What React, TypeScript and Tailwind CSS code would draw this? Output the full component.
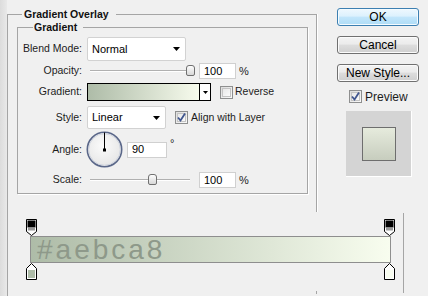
import React from "react";

function Arrow() {
  return (
    <svg width="7" height="4" viewBox="0 0 7 4">
      <polygon points="0,0 7,0 3.5,4" fill="#000" />
    </svg>
  );
}

function Select({ w, h, label }: { w: string; h: string; label: string }) {
  return (
    <div className={`${w} ${h} bg-white border border-[#d2d2d2] rounded-[2px] flex items-center justify-between pl-[4px] pr-[5px] text-[11px] text-black`}>
      <span>{label}</span>
      <Arrow />
    </div>
  );
}

function Checkbox({ checked }: { checked?: boolean }) {
  return (
    <div className="w-[13px] h-[13px] border border-[#8e8f8f] bg-gradient-to-br from-[#dcdcdc] to-[#fafafa] flex items-center justify-center shrink-0">
      <div className="w-[9px] h-[9px] border border-[#c4c4c4] bg-gradient-to-br from-[#e8e8e8] to-[#fbfbfb] flex items-center justify-center">
        {checked && (
          <svg width="9" height="9" viewBox="0 0 9 9" className="overflow-visible">
            <path d="M1 4.5 L3.5 7.5 L8 0.5" fill="none" stroke="#40568f" strokeWidth="1.8" />
          </svg>
        )}
      </div>
    </div>
  );
}

function Slider({ thumb }: { thumb: string }) {
  return (
    <div className="relative w-[110px] h-[16px]">
      <div className="absolute left-[3px] top-[7px] w-[100px] h-[2px] border-t border-[#b0b0b0] border-b border-b-white" />
      <div className={`absolute ${thumb} top-[2px] w-[9px] h-[11px] rounded-t-[3px] rounded-b-[2px] border border-[#707070] bg-gradient-to-b from-[#fdfdfd] to-[#d8d8d8]`} />
    </div>
  );
}

function Input({ w, value }: { w: string; value: string }) {
  return (
    <div className={`${w} h-[16px] bg-white border border-[#d0d0d0] flex items-center pl-[4px] text-[11px] text-black`}>
      {value}
    </div>
  );
}

function Label({ children }: { children: React.ReactNode }) {
  return <span className="w-[64px] text-right shrink-0">{children}</span>;
}

function TopStop() {
  return (
    <svg width="11" height="17" viewBox="0 0 11 17">
      <path d="M0.5 0.5 H10.5 V12.5 L5.5 16.5 L0.5 12.5 Z" fill="#fff" stroke="#000" />
      <rect x="1.5" y="1.5" width="8" height="7" fill="#000" />
      <rect x="2" y="8.5" width="7" height="3" fill="#9a9a9a" />
    </svg>
  );
}

function BottomStop({ color }: { color: string }) {
  return (
    <svg width="11" height="17" viewBox="0 0 11 17">
      <path d="M5.5 0.5 L10.5 5.5 V16.5 H0.5 V5.5 Z" fill="#fff" stroke="#000" />
      <rect x="2" y="7" width="7" height="8" fill={color} />
    </svg>
  );
}

function Button({ children, primary }: { children: React.ReactNode; primary?: boolean }) {
  return (
    <div
      className={
        primary
          ? "h-[18px] w-[82px] rounded-[3px] border border-[#3c7fb1] bg-[linear-gradient(to_bottom,#eef8fe_0%,#dcf1fd_45%,#c2e6fb_50%,#aedcf6_100%)] shadow-[inset_0_0_0_1px_#f4fbff] flex items-center justify-center text-[12px] text-black"
          : "h-[18px] w-[82px] rounded-[3px] border border-[#707070] bg-[linear-gradient(to_bottom,#f3f3f3_0%,#ebebeb_45%,#dddddd_50%,#cfcfcf_100%)] shadow-[inset_0_0_0_1px_#fbfbfb] flex items-center justify-center text-[12px] text-black"
      }
    >
      {children}
    </div>
  );
}

export default function App() {
  return (
    <div className="w-[428px] h-[296px] bg-[#f0f0f0] flex overflow-hidden font-['Liberation_Sans',Arial,sans-serif] text-[10.5px] text-[#1c1c1c]">
      <div className="w-[7px] shrink-0 bg-gradient-to-r from-[#dcdcdc] to-[#e9e9e9]" />
      <div className="flex flex-col w-[421px]">
        <div className="flex h-[212px]">
          <fieldset className="w-[310px] h-[205px] mt-[7px] border border-b-0 border-[#a5a5a5] shadow-[1px_0_0_#fff]">
            <legend className="ml-[14px] pl-[2px] pr-[7px] font-bold leading-[14px] text-[#111]">Gradient Overlay</legend>
            <fieldset className="ml-[9px] mr-[8px] mt-[-1px] h-[174px] border border-[#a5a5a5] shadow-[1px_1px_0_#fff]">
              <legend className="ml-[15px] pl-[1px] pr-[6px] font-bold leading-[14px] text-[#111]">Gradient</legend>
              <div className="flex flex-col">
                <div className="flex items-center mt-[3px] h-[24px]">
                  <Label>Blend Mode:</Label>
                  <div className="ml-[5px]">
                    <Select w="w-[99px]" h="h-[24px]" label="Normal" />
                  </div>
                </div>
                <div className="flex items-center mt-[2px] h-[16px]">
                  <Label>Opacity:</Label>
                  <div className="ml-[5px] flex items-center">
                    <Slider thumb="left-[99px]" />
                    <div className="ml-[2px]"><Input w="w-[37px]" value="100" /></div>
                    <span className="ml-[3px] text-[11px]">%</span>
                  </div>
                </div>
                <div className="flex items-center mt-[4px] h-[18px]">
                  <Label>Gradient:</Label>
                  <div className="ml-[5px] flex items-center">
                    <div className="w-[124px] h-[18px] border border-black flex">
                      <div className="flex-1 bg-gradient-to-r from-[#aebca8] to-[#f7fbed]" />
                      <div className="w-[11px] border-l border-black bg-white flex items-center justify-center">
                        <svg width="5" height="3" viewBox="0 0 5 3"><polygon points="0,0 5,0 2.5,3" fill="#000" /></svg>
                      </div>
                    </div>
                    <div className="ml-[9px]"><Checkbox /></div>
                    <span className="ml-[2px]">Reverse</span>
                  </div>
                </div>
                <div className="flex items-center mt-[5px] h-[23px]">
                  <Label>Style:</Label>
                  <div className="ml-[5px] flex items-center">
                    <Select w="w-[79px]" h="h-[23px]" label="Linear" />
                    <div className="ml-[9px]"><Checkbox checked /></div>
                    <span className="ml-[3px]">Align with Layer</span>
                  </div>
                </div>
                <div className="flex items-center mt-[2px] h-[37px]">
                  <Label>Angle:</Label>
                  <div className="ml-[4px] flex items-center">
                    <svg width="37" height="37" viewBox="0 0 37 37">
                      <defs>
                        <radialGradient id="dial" cx="45%" cy="40%" r="60%">
                          <stop offset="0%" stopColor="#fbfbfb" />
                          <stop offset="100%" stopColor="#e6e6e6" />
                        </radialGradient>
                      </defs>
                      <circle cx="18.5" cy="18.5" r="17.2" fill="url(#dial)" stroke="#5a6789" strokeWidth="1.6" />
                      <circle cx="18.5" cy="18.5" r="15.8" fill="none" stroke="#c9cfdc" strokeWidth="0.8" />
                      <line x1="18.5" y1="1.5" x2="18.5" y2="19" stroke="#000" strokeWidth="1" />
                      <rect x="17" y="17.5" width="3" height="3" fill="#000" />
                    </svg>
                    <div className="ml-[4px]"><Input w="w-[40px]" value="90" /></div>
                    <span className="ml-[3px] self-start mt-[7px] text-[11px] leading-[10px]">°</span>
                  </div>
                </div>
                <div className="flex items-center mt-[4px] h-[16px]">
                  <Label>Scale:</Label>
                  <div className="ml-[5px] flex items-center">
                    <Slider thumb="left-[61px]" />
                    <div className="ml-[2px]"><Input w="w-[37px]" value="100" /></div>
                    <span className="ml-[3px] text-[11px]">%</span>
                  </div>
                </div>
              </div>
            </fieldset>
          </fieldset>
          <div className="ml-[20px] w-[82px] flex flex-col">
            <div className="mt-[8px]"><Button primary>OK</Button></div>
            <div className="mt-[10px]"><Button>Cancel</Button></div>
            <div className="mt-[10px]"><Button>New Style...</Button></div>
            <div className="mt-[8px] ml-[12px] flex items-center h-[13px]">
              <Checkbox checked />
              <span className="ml-[3px] text-[12px]">Preview</span>
            </div>
            <div className="mt-[8px] ml-[9px] w-[66px] h-[66px] bg-[#d4d4d4] border-r border-b border-white flex items-center justify-center">
              <div className="w-[34px] h-[34px] border border-[#6e6e6e] bg-gradient-to-b from-[#e6ebdd] to-[#c7cdbe]" />
            </div>
          </div>
        </div>
        <div className="flex h-[84px] border-l border-[#a5a5a5]">
          <div className="w-[395px] flex flex-col">
            <div className="mt-[7px] ml-[18px] w-[369px] h-[17px] flex justify-between">
              <TopStop />
              <TopStop />
            </div>
            <div className="ml-[22px] w-[361px] h-[27px] border border-[#8e8e8e] bg-gradient-to-r from-[#aebca8] to-[#f8fdef] flex items-center pl-[6px]">
              <span className="text-[28px] leading-none tracking-[3px] text-[#8e998a]">#aebca8</span>
            </div>
            <div className="ml-[18px] w-[369px] h-[17px] flex justify-between">
              <BottomStop color="#aebca8" />
              <BottomStop color="#f8fdf0" />
            </div>
            <div className="ml-[308px] mt-[11px] w-[1px] h-[3px] bg-[#a5a5a5]" />
          </div>
          <div className="w-[1px] mt-[1px] h-[80px] bg-[#a5a5a5]" />
        </div>
      </div>
    </div>
  );
}
